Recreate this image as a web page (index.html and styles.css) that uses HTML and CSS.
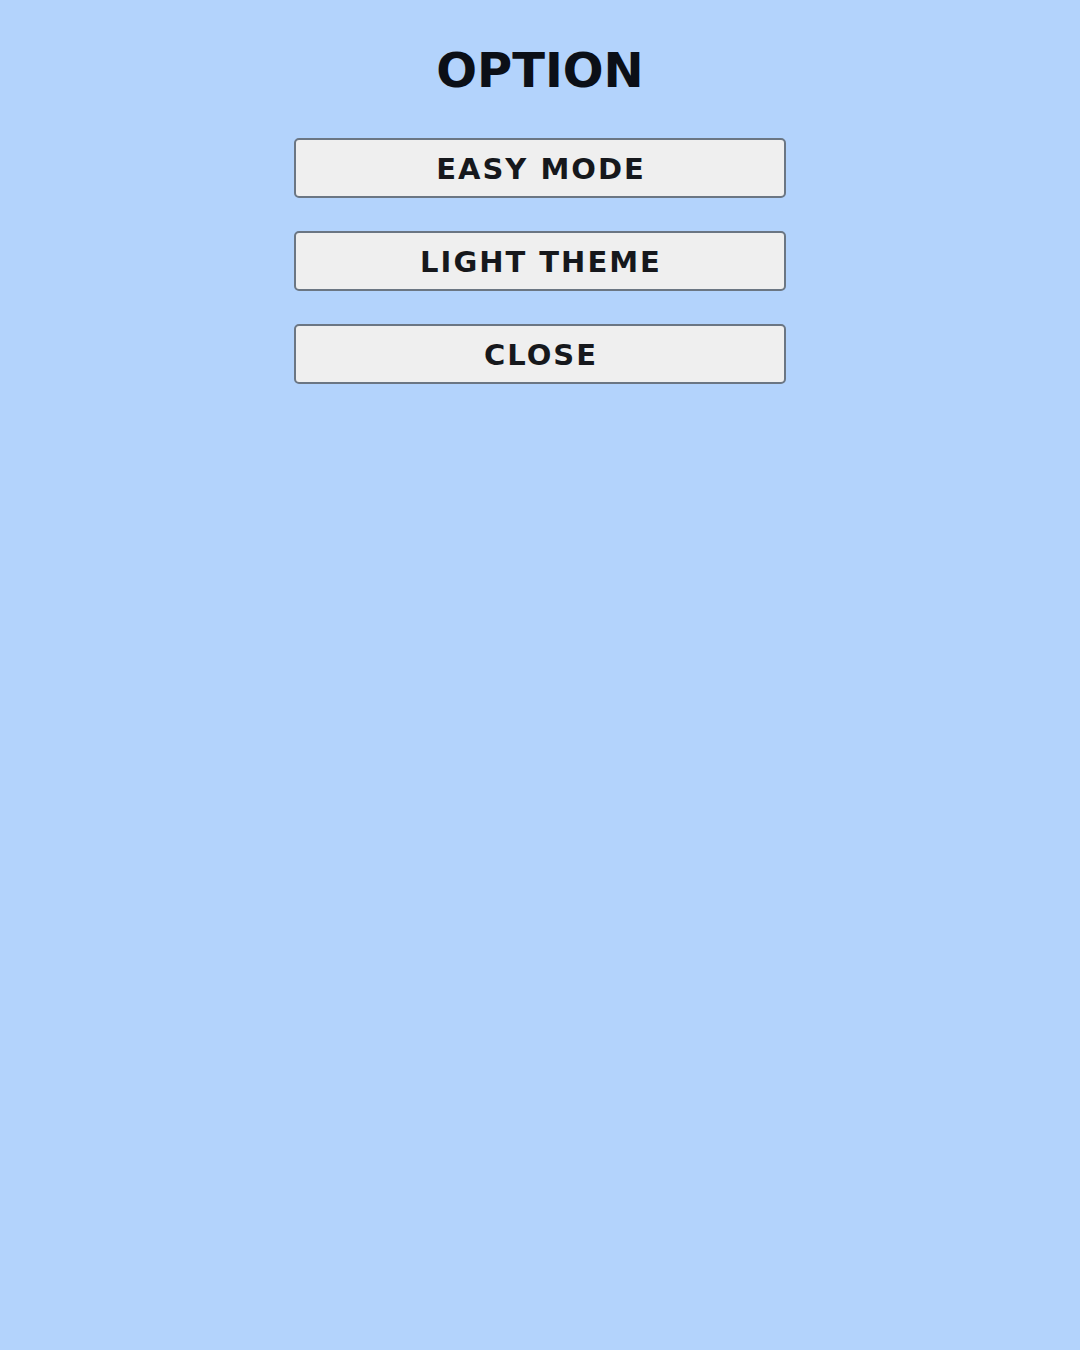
FILE: index.html
```html
<!DOCTYPE html>
<html>
<head>
<meta charset="utf-8">
<link rel="stylesheet" href="styles.css">
</head>
<body>
<main class="menu">
  <h1 class="title">OPTION</h1>
  <div class="buttons">
    <button class="btn">EASY MODE</button>
    <button class="btn">LIGHT THEME</button>
    <button class="btn">CLOSE</button>
  </div>
</main>
</body>
</html>
```

FILE: styles.css
```css
html, body {
  margin: 0;
  padding: 0;
  width: 1080px;
  height: 1350px;
  background: #b3d3fc;
  overflow: hidden;
}
.menu {
  display: flex;
  flex-direction: column;
  align-items: center;
  padding-top: 42px;
}
.title {
  margin: 0;
  font-family: "DejaVu Sans", sans-serif;
  font-weight: bold;
  font-size: 48px;
  line-height: 56px;
  letter-spacing: 0;
  color: #0b0f17;
}
.buttons {
  display: flex;
  flex-direction: column;
  gap: 33px;
  margin-top: 40px;
}
.btn {
  width: 492px;
  height: 60px;
  box-sizing: border-box;
  background: #efefef;
  border: 2px solid #6b7683;
  border-radius: 5px;
  font-family: "DejaVu Sans", sans-serif;
  font-weight: bold;
  font-size: 29px;
  letter-spacing: 2px;
  color: #16181c;
  padding: 2px 0 0 2px;
}
```
